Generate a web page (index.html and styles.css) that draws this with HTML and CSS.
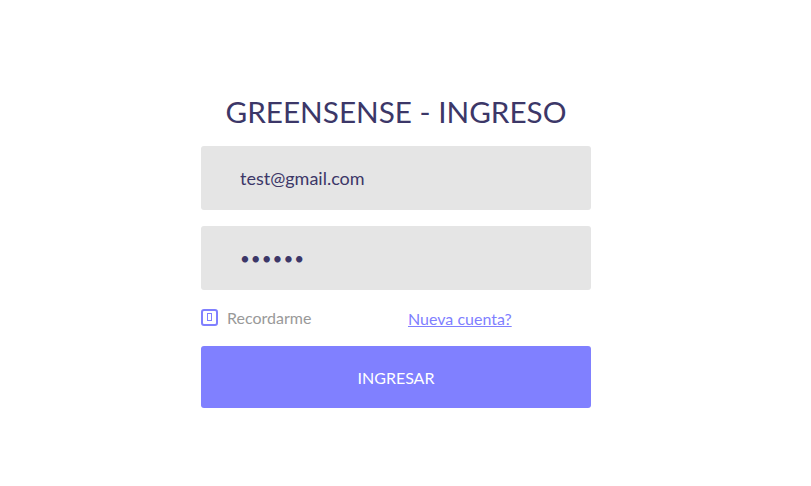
FILE: index.html
```html
<!DOCTYPE html>
<html lang="es">
<head>
<meta charset="utf-8">
<title>Greensense - Ingreso</title>
<link rel="stylesheet" href="styles.css">
</head>
<body>
<main class="page">
  <form class="login">
    <h1 class="title">GREENSENSE - INGRESO</h1>
    <input class="field" type="email" value="test@gmail.com">
    <input class="field field-pass" type="password" value="123456">
    <div class="options">
      <label class="remember">
        <span class="check"><span class="check-inner"></span></span>
        <span class="remember-text">Recordarme</span>
      </label>
      <a class="new-account" href="#">Nueva cuenta?</a>
    </div>
    <button class="submit" type="button">INGRESAR</button>
  </form>
</main>
</body>
</html>
```

FILE: styles.css
```css
* { box-sizing: border-box; }
html, body { margin: 0; padding: 0; background: #fff; }
body { font-family: Lato, "Noto Sans", sans-serif; }
.page {
  display: flex;
  justify-content: center;
  padding: 92px 19px 0 0;
}
.login {
  width: 390px;
  display: flex;
  flex-direction: column;
}
.title {
  margin: 0 0 14px;
  text-align: center;
  font-weight: 400;
  font-size: 29.7px;
  line-height: 40px;
  color: #3c3768;
}
.field {
  height: 64px;
  border: none;
  border-radius: 3px;
  background: #e5e5e5;
  padding: 0 0 0 39px;
  font-family: Lato, sans-serif;
  font-size: 18px;
  color: #3c3768;
  margin-bottom: 16px;
  outline: none;
}
.field-pass { letter-spacing: 1px; font-size: 17px; }
.options {
  display: flex;
  align-items: flex-start;
  height: 24px;
  margin-bottom: 16px;
}
.remember {
  display: flex;
  align-items: center;
  gap: 9px;
  width: 207px;
}
.check {
  width: 17px;
  height: 17px;
  border: 2px solid #8080ff;
  border-radius: 3px;
  display: flex;
  align-items: center;
  justify-content: center;
}
.check-inner {
  width: 5px;
  height: 8px;
  border: 1px solid #8080ff;
}
.remember-text {
  font-size: 16px;
  line-height: 20px;
  color: #999;
  padding-top: 2px;
}
.new-account {
  font-size: 16px;
  line-height: 20px;
  color: #8080ff;
  text-decoration: underline;
  margin-top: 3px;
}
.submit {
  height: 62px;
  border: none;
  border-radius: 3px;
  background: #8080ff;
  color: #fff;
  font-family: Lato, sans-serif;
  font-size: 16px;
}
```
